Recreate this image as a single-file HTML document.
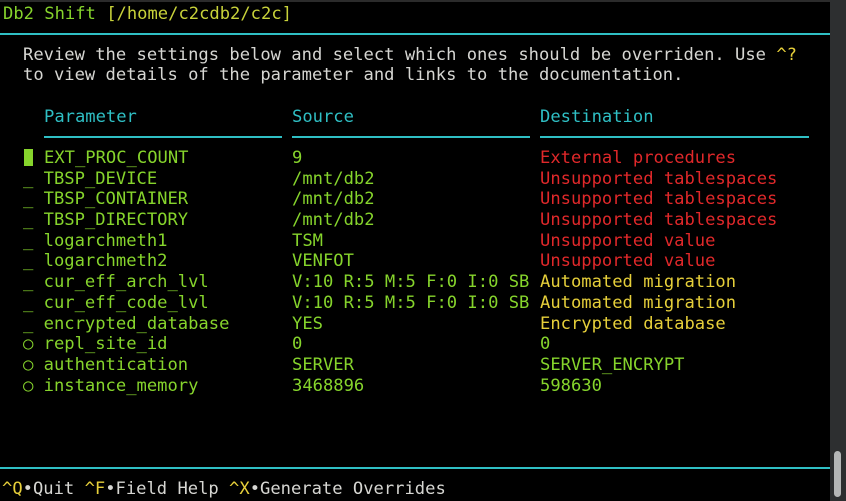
<!DOCTYPE html>
<html><head><meta charset="utf-8"><style>
html,body{margin:0;padding:0;background:#000;}
body{width:846px;height:501px;position:relative;overflow:hidden;font-family:"DejaVu Sans Mono","Liberation Mono",monospace;font-size:17.15px;}
.t{position:absolute;white-space:pre;line-height:20px;height:20px;margin-top:1px;}
.g{color:#86d42c}.r{color:#e0282a}.y{color:#e6cf3a}.c{color:#2fbfc4}.w{color:#d6d6d2}.yt{color:#c8d23a}
.ln{position:absolute;height:2px;background:#2fbfc4;}
</style></head><body>
<div style="position:absolute;left:0;top:0;width:846px;height:2px;background:#2b2b2b"></div>
<div style="position:absolute;left:830px;top:0;width:16px;height:501px;background:#2d2f30"></div>
<div style="position:absolute;left:834px;top:451px;width:7px;height:46px;background:#b4b6b6;border-radius:4px"></div>
<div class="t" style="left:3px;top:3px"><span class="g">Db2 Shift </span><span class="yt">[/home/c2cdb2/c2c]</span></div>
<div class="ln" style="left:0;top:33px;width:830px"></div>
<div class="t w" style="left:23px;top:44px">Review the settings below and select which ones should be overriden. Use <span class="y">^?</span></div>
<div class="t w" style="left:23px;top:64px">to view details of the parameter and links to the documentation.</div>
<div class="t c" style="left:44px;top:106px">Parameter</div>
<div class="t c" style="left:292px;top:106px">Source</div>
<div class="t c" style="left:540px;top:106px">Destination</div>
<div class="ln" style="left:44px;top:136px;width:238px"></div>
<div class="ln" style="left:292px;top:136px;width:238px"></div>
<div class="ln" style="left:540px;top:136px;width:269px"></div>
<div style="position:absolute;left:24px;top:149px;width:9px;height:17px;background:#86d42c"></div>

<div class="t g" style="left:44px;top:147px">EXT_PROC_COUNT</div><div class="t g" style="left:292px;top:147px">9</div><div class="t r" style="left:540px;top:147px">External procedures</div>

<div class="t g" style="left:23px;top:168px">_ TBSP_DEVICE</div><div class="t g" style="left:292px;top:168px">/mnt/db2</div><div class="t r" style="left:540px;top:168px">Unsupported tablespaces</div>
<div class="t g" style="left:23px;top:188px">_ TBSP_CONTAINER</div><div class="t g" style="left:292px;top:188px">/mnt/db2</div><div class="t r" style="left:540px;top:188px">Unsupported tablespaces</div>
<div class="t g" style="left:23px;top:209px">_ TBSP_DIRECTORY</div><div class="t g" style="left:292px;top:209px">/mnt/db2</div><div class="t r" style="left:540px;top:209px">Unsupported tablespaces</div>
<div class="t g" style="left:23px;top:230px">_ logarchmeth1</div><div class="t g" style="left:292px;top:230px">TSM</div><div class="t r" style="left:540px;top:230px">Unsupported value</div>
<div class="t g" style="left:23px;top:250px">_ logarchmeth2</div><div class="t g" style="left:292px;top:250px">VENFOT</div><div class="t r" style="left:540px;top:250px">Unsupported value</div>
<div class="t g" style="left:23px;top:271px">_ cur_eff_arch_lvl</div><div class="t g" style="left:292px;top:271px">V:10 R:5 M:5 F:0 I:0 SB</div><div class="t y" style="left:540px;top:271px">Automated migration</div>
<div class="t g" style="left:23px;top:292px">_ cur_eff_code_lvl</div><div class="t g" style="left:292px;top:292px">V:10 R:5 M:5 F:0 I:0 SB</div><div class="t y" style="left:540px;top:292px">Automated migration</div>
<div class="t g" style="left:23px;top:313px">_ encrypted_database</div><div class="t g" style="left:292px;top:313px">YES</div><div class="t y" style="left:540px;top:313px">Encrypted database</div>
<div class="t g" style="left:23px;top:333px">○ repl_site_id</div><div class="t g" style="left:292px;top:333px">0</div><div class="t g" style="left:540px;top:333px">0</div>
<div class="t g" style="left:23px;top:354px">○ authentication</div><div class="t g" style="left:292px;top:354px">SERVER</div><div class="t g" style="left:540px;top:354px">SERVER_ENCRYPT</div>
<div class="t g" style="left:23px;top:375px">○ instance_memory</div><div class="t g" style="left:292px;top:375px">3468896</div><div class="t g" style="left:540px;top:375px">598630</div>

<div class="ln" style="left:0;top:467px;width:830px"></div>
<div class="t" style="left:2px;top:478px"><span class="y">^Q</span><span class="w">•Quit </span><span class="y">^F</span><span class="w">•Field Help </span><span class="y">^X</span><span class="w">•Generate Overrides</span></div>
</body></html>
